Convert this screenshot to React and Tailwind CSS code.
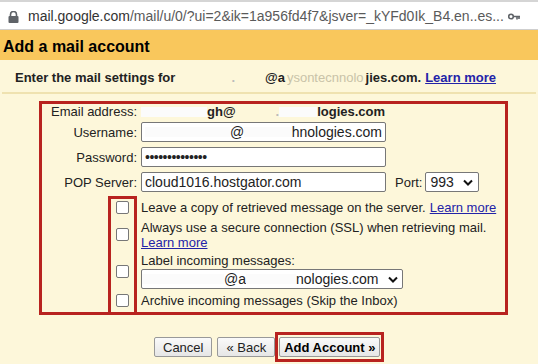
import React from 'react';

const font = { fontFamily: '"Liberation Sans", Arial, sans-serif' };

export default function App() {
  return (
    <div className="flex h-[364px] w-[538px] flex-col overflow-hidden bg-[#fdf7da] text-[13px] leading-[15px] text-[#222]" style={font}>
      <AddressBar />
      <div className="flex h-[30px] shrink-0 items-center bg-[#f9c75c] pl-[3px] pt-[2px] text-[16px] font-bold text-black">Add a mail account</div>

      <div className="flex h-[32px] shrink-0 items-center pl-[15px] pt-[2px] font-bold text-[#222]">
        <span>Enter the mail settings for</span>
        <Blank w="w-[56px]" />
        <span className="text-[#bbb]">.</span>
        <Blank w="w-[30px]" />
        <span>@a</span>
        <span className="px-[2px] font-normal text-[#c9c3a8]">ysontecnnolo</span>
        <span>jies.com.</span>
        <a className="ml-[4px] text-[#2323a8] underline">Learn more</a>
      </div>
      <div className="mx-[2px] h-[2px] shrink-0 bg-[#efe2b0]" />

      <div className="ml-[39px] mt-[7px] w-[469px] shrink-0 border-[3px] border-[#b8231f]">
        <div className="flex flex-col">
          <Row label="Email address:">
            <div className="flex h-[15px] items-center font-bold">
              <Blank w="w-[66px]" light />
              <span>gh@</span>
              <Blank w="w-[40px]" />
              <span className="text-[#bbb]">.</span>
              <Blank w="w-[38px]" light />
              <span>logies.com</span>
            </div>
          </Row>
          <Row label="Username:" mt="mt-[3px]">
            <Input>
              <Blank w="w-[100px]" light />
              <span>@</span>
              <Blank w="w-[56px]" light />
              <span>hnologies.com</span>
            </Input>
          </Row>
          <Row label="Password:" mt="mt-[5px]">
            <Input>
              <span className="text-[14px] leading-none tracking-[-0.5px]">••••••••••••••</span>
            </Input>
          </Row>
          <Row label="POP Server:" mt="mt-[5px]">
            <Input>cloud1016.hostgator.com</Input>
            <span className="ml-[9px]">Port:</span>
            <div className="ml-[3px] flex h-[20px] w-[54px] items-center justify-between rounded-[2px] border border-[#777] bg-white pl-[4px] pr-[5px] text-[14px]">
              <span>993</span>
              <Chevron />
            </div>
          </Row>
        </div>

        <div className="mt-[4px] grid grid-cols-[66px_29px_1fr] grid-rows-[22px_33px_40px_18px] pb-[3px]">
          <div className="col-start-2 row-span-4 row-start-1 -mb-[6px] border-[3px] border-[#b8231f]" />
          <Check row="row-start-1" />
          <Check row="row-start-2" />
          <Check row="row-start-3" />
          <Check row="row-start-4" />

          <div className="col-start-3 row-start-1 flex items-center pl-[4px]">
            <span>Leave a copy of retrieved message on the server.</span>
            <a className="ml-[4px] text-[#2323a8] underline">Learn more</a>
          </div>
          <div className="col-start-3 row-start-2 flex flex-col justify-center pl-[4px]">
            <span>Always use a secure connection (SSL) when retrieving mail.</span>
            <a className="text-[#2323a8] underline">Learn more</a>
          </div>
          <div className="col-start-3 row-start-3 flex flex-col pl-[4px] pt-[2px]">
            <span>Label incoming messages:</span>
            <div className="mt-[1px] flex h-[20px] w-[262px] items-center justify-between rounded-[2px] border border-[#777] bg-white pr-[4px] text-[14px]">
              <div className="flex items-center">
                <Blank w="w-[82px]" light />
                <span>@a</span>
                <Blank w="w-[50px]" light />
                <span>nologies.com</span>
              </div>
              <Chevron />
            </div>
          </div>
          <div className="col-start-3 row-start-4 flex items-center pl-[4px]">
            Archive incoming messages (Skip the Inbox)
          </div>
        </div>
      </div>

      <div className="mt-[17px] flex items-center pl-[154px]">
        <Button px="px-[8px]">Cancel</Button>
        <Button ml="ml-[5px]" px="px-[8px]">« Back</Button>
        <div className="flex h-[30px] items-center border-[3px] border-[#b8231f] px-[1px]">
          <Button bold px="px-[4px]">Add Account »</Button>
        </div>
      </div>
    </div>
  );
}

function AddressBar() {
  return (
    <div className="flex h-[30px] shrink-0 items-center border-b border-t-2 border-b-[#cfcfcf] border-t-[#d5d5d5] bg-white pl-[8px] pr-[18px] pt-[2px] text-[14px]">
      <svg width="11" height="12" viewBox="0 0 11 12" className="shrink-0">
        <path d="M2.5 5V3.5a3 3 0 0 1 6 0V5" fill="none" stroke="#5f6368" strokeWidth="1.6" />
        <rect x="0.5" y="5" width="10" height="7" rx="1" fill="#5f6368" />
      </svg>
      <span className="ml-[9px] whitespace-nowrap text-[#333]">
        mail.google.com<span className="text-[#5a5a5a]">/mail/u/0/?ui=2&amp;ik=1a956fd4f7&amp;jsver=_kYFd0Ik_B4.en..es...</span>
      </span>
      <svg width="12" height="7" viewBox="0 0 12 7" className="ml-auto shrink-0">
        <circle cx="3" cy="3.5" r="2.3" fill="none" stroke="#5f6368" strokeWidth="1.6" />
        <path d="M5 3.5h7M9 3.5v3M11 3.5v2.5" stroke="#5f6368" strokeWidth="1.6" />
      </svg>
    </div>
  );
}

function Row({ label, mt = '', children }) {
  return (
    <div className={`flex items-center ${mt}`}>
      <div className="w-[95px] shrink-0 text-right">{label}</div>
      <div className="ml-[4px] flex items-center">{children}</div>
    </div>
  );
}

function Input({ children }) {
  return (
    <div className="flex h-[20px] w-[245px] items-center overflow-hidden rounded-[2px] border border-[#777] bg-white px-[3px] text-[14px] text-[#222]">
      {children}
    </div>
  );
}

function Blank({ w, light }) {
  return <span className={`inline-block h-[10px] ${w} ${light ? 'bg-[#fbfbfb]' : ''}`} />;
}

function Check({ row }) {
  return (
    <div className={`col-start-2 ${row} h-[13px] w-[13px] self-center justify-self-center rounded-[2px] border border-[#777] bg-white`} />
  );
}

function Chevron() {
  return (
    <svg width="10" height="7" viewBox="0 0 10 7">
      <path d="M1 1.5l4 4 4-4" fill="none" stroke="#111" strokeWidth="2" />
    </svg>
  );
}

function Button({ children, bold, ml = '', px = 'px-[7px]' }) {
  return (
    <div
      className={`${ml} ${px} flex h-[20px] items-center rounded-[2px] border border-[#999] bg-gradient-to-b from-[#fafafa] to-[#e6e6e6] text-[13px] text-[#222] ${bold ? 'font-bold text-black' : ''}`}
    >
      {children}
    </div>
  );
}
